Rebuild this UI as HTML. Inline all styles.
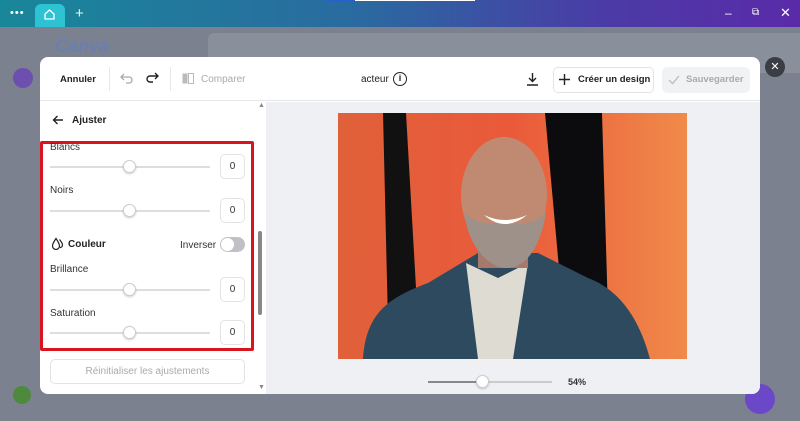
<!DOCTYPE html>
<html><head><meta charset="utf-8"><style>
*{margin:0;padding:0;box-sizing:border-box}
body{width:800px;height:421px;overflow:hidden;font-family:"Liberation Sans",sans-serif;background:#80848f;position:relative}
.top{position:absolute;left:0;top:0;width:800px;height:27px;background:linear-gradient(90deg,#19879a 0%,#2a6aa0 45%,#4a3ca6 75%,#5b2aa8 100%)}
.tab{position:absolute;left:35px;top:4px;width:30px;height:23px;background:#2ec3d3;border-radius:6px 6px 0 0}
.bg{position:absolute;left:0;top:27px;width:800px;height:394px;background:#7c8190}
.modal{position:absolute;left:40px;top:57px;width:720px;height:337px;background:#fff;border-radius:8px;overflow:hidden}
.hdr{position:absolute;left:0;top:0;width:720px;height:44px;border-bottom:1px solid #e6e7ea;font-size:10.5px;color:#222}
.canvas{position:absolute;left:226px;top:45px;width:494px;height:292px;background:#eff0f3}
.t{position:absolute;white-space:nowrap}
.lbl{position:absolute;left:10px;font-size:10px;color:#333}
.sl{position:absolute;left:10px;width:160px;height:2px;background:#dcdde0}
.kn{position:absolute;width:13px;height:13px;border-radius:50%;background:#fff;border:1px solid #ccc;box-shadow:0 1px 2px rgba(0,0,0,.2)}
.bx{position:absolute;left:180px;width:25px;height:25px;border:1px solid #e2e3e6;border-radius:5px;font-size:10px;text-align:center;line-height:23px;color:#333}
</style></head><body>
<div class="top"></div>
<div class="t" style="left:10px;top:7px;color:#fff;font-size:11px;letter-spacing:1px">•••</div>
<div class="tab"></div>
<svg style="position:absolute;left:43px;top:8px" width="13" height="13" viewBox="0 0 13 13"><path d="M2 6L6.5 2L11 6V11H2Z" fill="none" stroke="#fff" stroke-width="1.3"/></svg>
<div class="t" style="left:75px;top:5px;color:#dfe;font-size:15px">+</div>
<div style="position:absolute;left:325px;top:0;width:95px;height:2px;background:#2a5fd0"></div>
<div style="position:absolute;left:355px;top:0;width:120px;height:1px;background:#fff"></div>
<div class="t" style="left:725px;top:6px;color:#fff;font-size:12px">–</div>
<div class="t" style="left:752px;top:7px;color:#fff;font-size:10px">⧉</div>
<div class="t" style="left:780px;top:5px;color:#fff;font-size:13px">✕</div>
<div class="bg"></div>
<div style="position:absolute;left:208px;top:33px;width:600px;height:40px;background:#8a8f9c;border-radius:6px"></div>
<div class="t" style="left:55px;top:36px;color:#6a7fb0;font-size:18px;font-weight:bold;font-style:italic">Canva</div>
<div style="position:absolute;left:13px;top:68px;width:20px;height:20px;border-radius:50%;background:#6d4fb0"></div>
<div style="position:absolute;left:13px;top:386px;width:18px;height:18px;border-radius:50%;background:#4e8a3e"></div>
<div style="position:absolute;left:745px;top:384px;width:30px;height:30px;border-radius:50%;background:#6a48c8"></div>
<div style="position:absolute;left:765px;top:57px;width:20px;height:20px;border-radius:50%;background:#3b3d45;color:#fff;font-size:11px;text-align:center;line-height:20px">✕</div>
<div class="modal">
 <div class="hdr">
  <div class="t" style="left:20px;top:17px;font-weight:bold;font-size:9.5px">Annuler</div>
  <div style="position:absolute;left:69px;top:10px;width:1px;height:24px;background:#e6e7ea"></div>
  <svg style="position:absolute;left:80px;top:15px" width="14" height="12" viewBox="0 0 14 12"><path d="M4 2L1 5L4 8M1 5H9a3 3 0 0 1 0 6H6" fill="none" stroke="#aaa" stroke-width="1.3"/></svg>
  <svg style="position:absolute;left:105px;top:14px" width="14" height="12" viewBox="0 0 14 12"><path d="M10 2L13 5L10 8M13 5H5a3 3 0 0 0 0 6H8" fill="none" stroke="#222" stroke-width="1.4"/></svg>
  <div style="position:absolute;left:130px;top:10px;width:1px;height:24px;background:#e6e7ea"></div>
  <svg style="position:absolute;left:142px;top:16px" width="12" height="11"><rect x="0.5" y="0.5" width="5" height="10" fill="#bbb"/><rect x="6.5" y="0.5" width="5" height="10" fill="none" stroke="#bbb"/></svg>
  <div class="t" style="left:161px;top:17px;color:#aaa;font-size:10px">Comparer</div>
  <div class="t" style="left:321px;top:17px;font-size:10px">acteur</div>
  <div style="position:absolute;left:353px;top:15px;width:14px;height:14px;border:1.5px solid #222;border-radius:50%;font-size:9px;text-align:center;line-height:11px;font-weight:bold">i</div>
  <svg style="position:absolute;left:486px;top:15px" width="13" height="14" viewBox="0 0 13 14"><path d="M6.5 1V9M3 6L6.5 9.5L10 6M1 13H12" fill="none" stroke="#222" stroke-width="1.4"/></svg>
  <div style="position:absolute;left:513px;top:10px;width:101px;height:26px;border:1px solid #e2e3e6;border-radius:5px"></div>
  <svg style="position:absolute;left:519px;top:17px" width="11" height="11"><path d="M5.5 0V11M0 5.5H11" stroke="#222" stroke-width="1.4"/></svg>
  <div class="t" style="left:538px;top:17px;font-weight:bold;font-size:9.5px">Créer un design</div>
  <div style="position:absolute;left:622px;top:10px;width:88px;height:26px;background:#f1f2f4;border-radius:5px"></div>
  <svg style="position:absolute;left:628px;top:18px" width="12" height="10"><path d="M1 5L4.5 8.5L11 1" fill="none" stroke="#bbb" stroke-width="1.3"/></svg>
  <div class="t" style="left:646px;top:17px;color:#aaa;font-weight:bold;font-size:9.5px">Sauvegarder</div>
 </div>
 <div style="position:absolute;left:218px;top:174px;width:4px;height:84px;background:#888;border-radius:2px"></div>
 <div class="t" style="left:218px;top:45px;font-size:7px;color:#888">▲</div>
 <div class="t" style="left:218px;top:327px;font-size:7px;color:#888">▼</div>
 <svg style="position:absolute;left:12px;top:57px" width="12" height="12" viewBox="0 0 12 12"><path d="M11 6H1.5M5.5 2L1.5 6L5.5 10" fill="none" stroke="#222" stroke-width="1.4"/></svg>
 <div class="t" style="left:32px;top:58px;font-size:10px;font-weight:bold;color:#222">Ajuster</div>
 <div style="position:absolute;left:0;top:84px;width:214px;height:210px;border:3px solid #d9141f;border-radius:2px"></div>
 <div style="position:absolute;left:0;top:0;width:226px;height:337px">
  <div class="lbl" style="top:85px">Blancs</div>
  <div class="sl" style="top:109px"></div><div class="kn" style="left:83px;top:103px"></div>
  <div class="bx" style="top:97px">0</div>
  <div class="lbl" style="top:128px">Noirs</div>
  <div class="sl" style="top:153px"></div><div class="kn" style="left:83px;top:147px"></div>
  <div class="bx" style="top:141px">0</div>
  <svg style="position:absolute;left:11px;top:180px" width="13" height="14" viewBox="0 0 13 14"><path d="M5 1.5C3 4.5 1.5 6.5 1.5 9a3.5 3.5 0 0 0 7 0C8.5 6.5 7 4.5 5 1.5Z" fill="none" stroke="#222" stroke-width="1.2"/><path d="M8.5 2.5C10 4.5 11.5 6 11.5 8a2.5 2.5 0 0 1-2.5 2.5" fill="none" stroke="#222" stroke-width="1.2"/></svg>
  <div class="t" style="left:28px;top:182px;font-size:10px;font-weight:bold;color:#222">Couleur</div>
  <div class="t" style="left:140px;top:183px;font-size:10px;color:#333">Inverser</div>
  <div style="position:absolute;left:180px;top:180px;width:25px;height:15px;border-radius:8px;background:#bfc1c6"></div>
  <div style="position:absolute;left:181px;top:181px;width:13px;height:13px;border-radius:50%;background:#fff"></div>
  <div class="lbl" style="top:207px">Brillance</div>
  <div class="sl" style="top:232px"></div><div class="kn" style="left:83px;top:226px"></div>
  <div class="bx" style="top:220px">0</div>
  <div class="lbl" style="top:251px">Saturation</div>
  <div class="sl" style="top:275px"></div><div class="kn" style="left:83px;top:269px"></div>
  <div class="bx" style="top:263px">0</div>
  <div style="position:absolute;left:10px;top:302px;width:195px;height:25px;border:1px solid #e2e3e6;border-radius:5px;font-size:10px;color:#aaa;text-align:center;line-height:23px">Réinitialiser les ajustements</div>
 </div>
 <div class="canvas">
  <svg style="position:absolute;left:72px;top:11px" width="349" height="246" viewBox="0 0 349 246">
   <defs><linearGradient id="o" x1="0" x2="1"><stop offset="0" stop-color="#e0603a"/><stop offset=".5" stop-color="#ea5a3a"/><stop offset="1" stop-color="#f08a4a"/></linearGradient></defs>
   <rect width="349" height="246" fill="url(#o)"/>
   <path d="M45 0H68L80 210H50Z" fill="#111"/>
   <path d="M207 0H264L270 200H225Z" fill="#0c0c0e"/>
   <path d="M25 246C28 200 50 185 90 170L140 140H200L250 165C290 180 305 220 312 246Z" fill="#2e4a5e"/>
   <path d="M128 150L160 165L190 150L175 246H140Z" fill="#dedbd3"/>
   <rect x="140" y="120" width="50" height="35" fill="#a8786a"/>
   <ellipse cx="166" cy="82" rx="43" ry="58" fill="#c08a72"/>
   <path d="M126 100C132 140 155 155 168 155C188 155 202 135 208 100C195 112 180 112 166 110C150 112 138 110 126 100Z" fill="#9d918a"/>
   <path d="M146 102Q167 120 189 102Q167 112 146 102Z" fill="#fff"/>
  </svg>
  <div style="position:absolute;left:162px;top:279px;width:124px;height:2px;background:#c9cbd0"></div>
  <div style="position:absolute;left:162px;top:279px;width:55px;height:2px;background:#888"></div>
  <div class="kn" style="left:210px;top:273px"></div>
  <div class="t" style="left:302px;top:275px;font-size:9px;font-weight:bold;color:#333">54%</div>
 </div>
</div>
</body></html>
